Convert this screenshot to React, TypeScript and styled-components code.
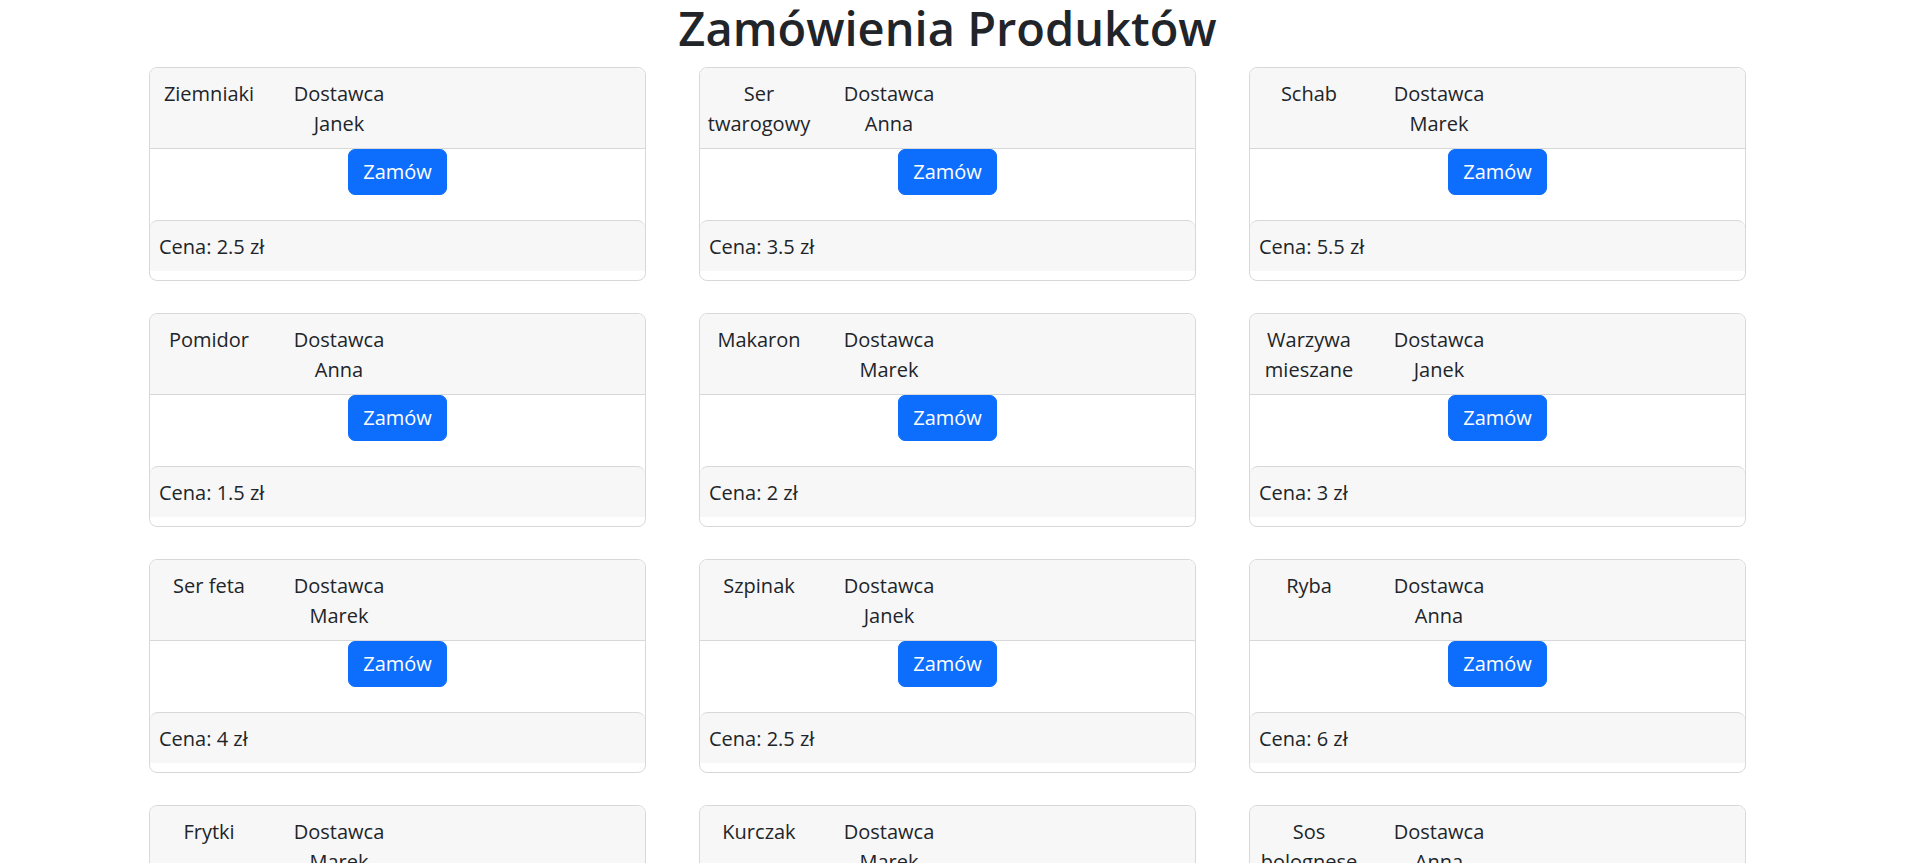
import styled, { createGlobalStyle } from "styled-components";

const GlobalStyle = createGlobalStyle`
  html, body {
    margin: 0;
    padding: 0;
    background: #fff;
  }
  body {
    font-family: "Open Sans", "Noto Sans", sans-serif;
    font-size: 20px;
    line-height: 30px;
    color: #212529;
  }
  * {
    box-sizing: border-box;
  }
`;

// the reference page has a browser scrollbar on the right
const Page = styled.div`
  display: flex;
  flex-direction: column;
  align-items: center;
  padding: 0 22px 40px 0;
`;

const Title = styled.h1`
  margin: -2px 0 9px;
  font-size: 47px;
  line-height: 60px;
  font-weight: 600;
  text-align: center;
`;

const Grid = styled.div`
  width: 1597px;
  display: grid;
  grid-template-columns: repeat(3, 1fr);
  column-gap: 53px;
  row-gap: 32px;
`;

const Card = styled.div`
  border: 1px solid #d6d8da;
  border-radius: 8px;
  background: #fff;
  display: flex;
  flex-direction: column;
  padding-bottom: 9px;
  overflow: hidden;
`;

const Header = styled.div`
  display: flex;
  align-items: flex-start;
  gap: 15px;
  padding: 11px 0 9px 4px;
  background: #f7f7f7;
  border-bottom: 1px solid #d6d8da;
`;

const Name = styled.div`
  width: 110px;
  text-align: center;
`;

const Supplier = styled.div`
  width: 120px;
  text-align: center;
`;

const Body = styled.div`
  display: flex;
  justify-content: center;
  padding-bottom: 25px;
`;

const OrderButton = styled.button`
  font-family: inherit;
  font-size: 20px;
  line-height: 30px;
  color: #fff;
  background: #0d6efd;
  border: 1px solid #0d6efd;
  border-radius: 7px;
  padding: 7px 14px;
  cursor: pointer;
`;

const Footer = styled.div`
  background: #f7f7f7;
  border-top: 1px solid #d6d8da;
  border-radius: 8px 8px 0 0;
  padding: 11px 9px 9px;
`;

type Product = {
  name: string;
  supplier: string;
  price: string;
};

const products: Product[] = [
  { name: "Ziemniaki", supplier: "Janek", price: "2.5" },
  { name: "Ser twarogowy", supplier: "Anna", price: "3.5" },
  { name: "Schab", supplier: "Marek", price: "5.5" },
  { name: "Pomidor", supplier: "Anna", price: "1.5" },
  { name: "Makaron", supplier: "Marek", price: "2" },
  { name: "Warzywa mieszane", supplier: "Janek", price: "3" },
  { name: "Ser feta", supplier: "Marek", price: "4" },
  { name: "Szpinak", supplier: "Janek", price: "2.5" },
  { name: "Ryba", supplier: "Anna", price: "6" },
  { name: "Frytki", supplier: "Marek", price: "3" },
  { name: "Kurczak", supplier: "Marek", price: "7" },
  { name: "Sos bolognese", supplier: "Anna", price: "4.5" },
];

export default function App() {
  return (
    <Page>
      <GlobalStyle />
      <Title>Zamówienia Produktów</Title>
      <Grid>
        {products.map((p) => (
          <Card key={p.name}>
            <Header>
              <Name>{p.name}</Name>
              <Supplier>
                Dostawca
                <br />
                {p.supplier}
              </Supplier>
            </Header>
            <Body>
              <OrderButton>Zamów</OrderButton>
            </Body>
            <Footer>Cena: {p.price} zł</Footer>
          </Card>
        ))}
      </Grid>
    </Page>
  );
}
